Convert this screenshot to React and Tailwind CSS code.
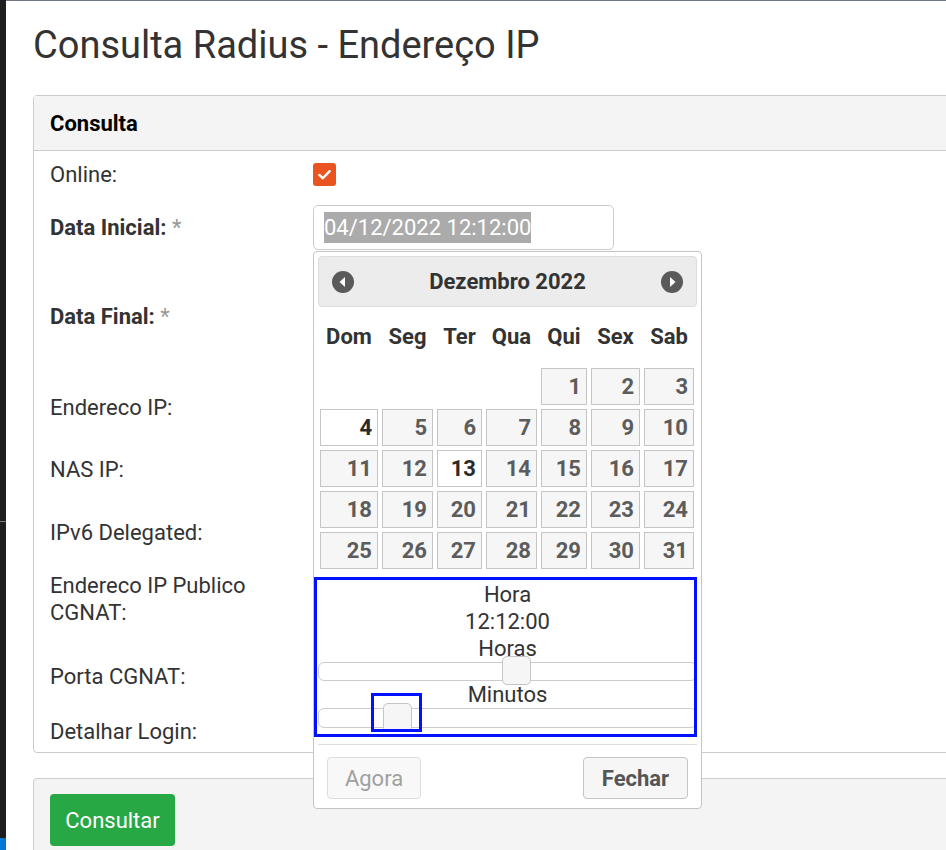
import React from 'react';

const font = { fontFamily: 'Roboto, "Liberation Sans", sans-serif' };

const weekDays = ['Dom', 'Seg', 'Ter', 'Qua', 'Qui', 'Sex', 'Sab'];

// december 2022 starts on thursday
const days = [null, null, null, null, 1, 2, 3];
for (let d = 4; d <= 31; d++) days.push(d);

const CircleArrow = ({ dir }) => (
  <svg width="24" height="24" viewBox="0 0 24 24">
    <circle cx="12" cy="12" r="11" fill="#5a5a5a" />
    {dir === 'left' ? (
      <path d="M14 7 L8.5 12 L14 17 Z" fill="#fff" />
    ) : (
      <path d="M10 7 L15.5 12 L10 17 Z" fill="#fff" />
    )}
  </svg>
);

const DatePicker = () => (
  <div className="absolute left-0 top-full mt-[1px] w-[389px] bg-white border border-[#c5c5c5] rounded-[4px] p-[4px] z-10">
    <div className="relative h-[51px] bg-[#ececec] border border-[#dddddd] rounded-[4px] flex items-center justify-between px-[12px]">
      <CircleArrow dir="left" />
      <span className="font-bold text-[22px] text-[#333]">Dezembro 2022</span>
      <CircleArrow dir="right" />
    </div>

    <div className="px-[2px] pt-[9px]">
      <div className="grid grid-cols-[58px_51px_45px_51px_46px_49px_50px] gap-x-[4px]">
        {weekDays.map((w) => (
          <div key={w} className="h-[40px] flex items-center justify-center font-bold text-[22px] text-[#333]">
            {w}
          </div>
        ))}
      </div>
      <div className="grid grid-cols-[58px_51px_45px_51px_46px_49px_50px] gap-x-[4px] gap-y-[4px] mt-[12px]">
        {days.map((d, i) => {
          if (d === null) return <div key={'e' + i} className="h-[37px]" />;
          const active = d === 4 || d === 13;
          return (
            <div
              key={d}
              className={`h-[37px] border border-[#c5c5c5] flex items-center justify-end pr-[5px] font-bold text-[22px] ${
                active ? 'bg-white text-[#2b2b2b]' : 'bg-[#f6f6f6] text-[#5c5c5c]'
              }`}
            >
              {d}
            </div>
          );
        })}
      </div>
    </div>

    {/* time section */}
    <div className="relative mt-[9px] pt-[3px] pb-[14px] text-[22px] text-[#333] text-center leading-[27px]">
      <div>Hora</div>
      <div>12:12:00</div>
      <div>Horas</div>
      <div className="relative h-[19px] border border-[#cccccc] rounded-[6px] bg-white">
        <div className="absolute left-[183px] top-[-7px] w-[29px] h-[29px] bg-[#f6f6f6] border border-[#c5c5c5] rounded-[5px]" />
      </div>
      <div>Minutos</div>
      <div className="relative h-[20px] border border-[#cccccc] rounded-[6px] bg-white">
        <div className="absolute left-[64px] top-[-6px] w-[29px] h-[29px] bg-[#f6f6f6] border border-[#c5c5c5] rounded-[5px]" />
      </div>
      {/* annotation boxes */}
      <div className="absolute left-[-4px] top-[-1px] w-[383px] h-[160px] border-[3px] border-[#0011ff]" />
      <div className="absolute left-[53px] top-[115px] w-[51px] h-[39px] border-[3px] border-[#0011ff]" />
    </div>

    <div className="border-t border-[#dddddd] mt-[2px] pt-[12px] pb-[5px] px-[9px] flex justify-between">
      <button className="h-[42px] w-[94px] border border-[#dddddd] rounded-[4px] bg-[#f8f8f8] text-[22px] text-[#a0a0a0]">
        Agora
      </button>
      <button className="h-[42px] w-[105px] border border-[#c5c5c5] rounded-[4px] bg-[#f6f6f6] text-[22px] font-bold text-[#555]">
        Fechar
      </button>
    </div>
  </div>
);

const Row = ({ label, bold, className = '', children }) => (
  <div className={`flex items-center ${className}`}>
    <div className={`w-[263px] text-[22px] leading-[27px] text-[#333] ${bold ? 'font-bold' : ''}`}>
      {label}
      {bold && <span className="font-normal text-[#999]"> *</span>}
    </div>
    <div className="relative">{children}</div>
  </div>
);

export default function App() {
  return (
    <div className="w-[946px] h-[850px] overflow-hidden flex bg-white" style={font}>
      <div className="w-[6px] h-full bg-[#1e1e1e] flex flex-col">
        <div className="h-[521px]" />
        <div className="h-px bg-[#7a7a7a]" />
        <div className="flex-1" />
        <div className="h-[12px] bg-[#0078d4]" />
      </div>

      <div className="flex-1 min-w-0">
        <div className="h-px bg-[#6e7681]" />
        <div className="pl-[27px]">
          <h1 className="mt-[20px] text-[38px] leading-[48px] text-[#333]">Consulta Radius - Endereço IP</h1>

          <div className="mt-[26px] w-[1000px] border border-[#cccccc] rounded-[4px]">
            <div className="h-[55px] bg-[#f4f4f4] border-b border-[#cccccc] flex items-center px-[16px]">
              <span className="font-bold text-[22px] text-black">Consulta</span>
            </div>

            <div className="px-[16px] pt-[9px] pb-[7px]">
              <Row label="Online:" className="h-[28px]">
                <div className="w-[23px] h-[23px] rounded-[3px] bg-[#e95420] flex items-center justify-center">
                  <svg width="15" height="15" viewBox="0 0 16 16">
                    <path d="M2.5 8.5 L6.2 12 L13.5 4.5" stroke="#fff" strokeWidth="2.6" fill="none" strokeLinecap="round" strokeLinejoin="round" />
                  </svg>
                </div>
              </Row>

              <Row label="Data Inicial:" bold className="h-[45px] mt-[17px]">
                <div className="w-[301px] h-[45px] border border-[#cccccc] rounded-[5px] bg-white flex items-center pl-[10px] text-[22px]">
                  <span className="bg-[#ababab] text-white leading-[31px]">04/12/2022 12:12:00</span>
                </div>
                <DatePicker />
              </Row>

              <Row label="Data Final:" bold className="h-[45px] mt-[44px]" />
              <Row label="Endereco IP:" className="h-[45px] mt-[46px]" />
              <Row label="NAS IP:" className="h-[45px] mt-[17px]" />
              <Row label="IPv6 Delegated:" className="h-[45px] mt-[18px]" />
              <Row label={<>Endereco IP Publico<br />CGNAT:</>} className="h-[54px] mt-[17px]" />
              <Row label="Porta CGNAT:" className="h-[45px] mt-[28px]" />
              <Row label="Detalhar Login:" className="h-[28px] mt-[18px]" />
            </div>
          </div>

          <div className="mt-[25px] w-[1000px] h-[100px] bg-[#f4f4f4] border border-[#cccccc] rounded-[4px] px-[16px] pt-[15px]">
            <button className="h-[52px] w-[125px] bg-[#28a745] rounded-[4px] text-white text-[22px]">Consultar</button>
          </div>
        </div>
      </div>
    </div>
  );
}
